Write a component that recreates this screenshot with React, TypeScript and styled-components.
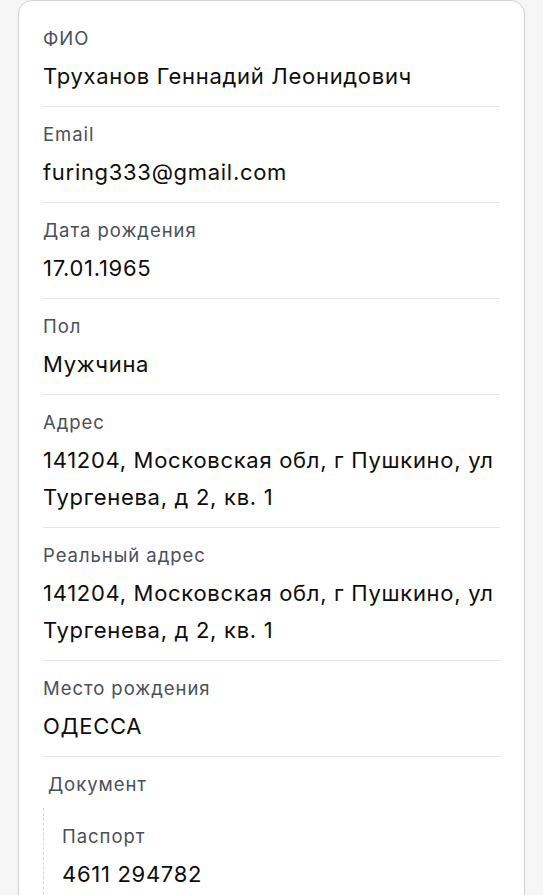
import React from 'react';
import styled, { createGlobalStyle } from 'styled-components';

const GlobalStyle = createGlobalStyle`
  html, body {
    margin: 0;
    padding: 0;
    background: #f6f6f6;
  }
  body {
    font-family: Inter, "Noto Sans", "Liberation Sans", sans-serif;
    -webkit-font-smoothing: antialiased;
  }
`;

const Page = styled.div`
  padding: 0 18px;
  height: 895px;
  overflow: hidden;
  box-sizing: border-box;
`;

const Card = styled.div`
  background: #fff;
  border: 1px solid #d4d4d4;
  border-radius: 14px;
  padding: 10px 24px 40px;
  box-shadow: 0 1px 2px rgba(0, 0, 0, 0.06);
`;

const Row = styled.div<{ $last?: boolean }>`
  padding: 14px 0 11px;
  border-bottom: ${(p) => (p.$last ? 'none' : '1.5px solid #e6e6e6')};
`;

const Label = styled.div`
  font-size: 18.5px;
  line-height: 26px;
  letter-spacing: 0.95px;
  color: #4a4f59;
  margin-bottom: 7px;
`;

const Value = styled.div`
  font-size: 22px;
  line-height: 37px;
  letter-spacing: 0.7px;
  color: #0d0d0d;
`;

const GroupTitle = styled.div`
  font-size: 18.5px;
  line-height: 26px;
  letter-spacing: 0.95px;
  color: #4a4f59;
  padding: 14px 5px 11px;
`;

const Nested = styled.div`
  border-left: 1px dashed #d6d6d6;
  padding-left: 18px;
  padding-top: 1px;
`;

type Field = { label: string; value: string };

const fields: Field[] = [
  { label: 'ФИО', value: 'Труханов Геннадий Леонидович' },
  { label: 'Email', value: 'furing333@gmail.com' },
  { label: 'Дата рождения', value: '17.01.1965' },
  { label: 'Пол', value: 'Мужчина' },
  { label: 'Адрес', value: '141204, Московская обл, г Пушкино, ул Тургенева, д 2, кв. 1' },
  { label: 'Реальный адрес', value: '141204, Московская обл, г Пушкино, ул Тургенева, д 2, кв. 1' },
  { label: 'Место рождения', value: 'ОДЕССА' },
];

const App = () => {
  return (
    <>
      <GlobalStyle />
      <Page>
        <Card>
          {fields.map((f) => (
            <Row key={f.label}>
              <Label>{f.label}</Label>
              <Value>{f.value}</Value>
            </Row>
          ))}
          <GroupTitle>Документ</GroupTitle>
          <Nested>
            <Row $last>
              <Label>Паспорт</Label>
              <Value>4611 294782</Value>
            </Row>
          </Nested>
        </Card>
      </Page>
    </>
  );
};

export default App;
